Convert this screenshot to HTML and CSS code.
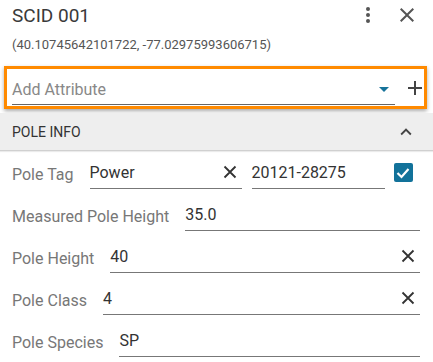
FILE: index.html
```html
<!DOCTYPE html>
<html>
<head>
<meta charset="utf-8">
<link rel="stylesheet" href="styles.css">
</head>
<body>
<div class="panel">
  <div class="header">
    <div class="title-row">
      <div class="title">SCID 001</div>
      <div class="actions">
        <svg class="icon kebab" width="24" height="24" viewBox="0 0 24 24"><circle cx="12" cy="6" r="2"/><circle cx="12" cy="12" r="2"/><circle cx="12" cy="18" r="2"/></svg>
        <svg class="icon close" width="24" height="24" viewBox="0 0 24 24"><path d="M19 6.41L17.59 5 12 10.59 6.41 5 5 6.41 10.59 12 5 17.59 6.41 19 12 13.41 17.59 19 19 17.59 13.41 12z"/></svg>
      </div>
    </div>
    <div class="coords">(40.10745642101722, -77.02975993606715)</div>
  </div>

  <div class="add-box">
    <div class="add-field">
      <span class="placeholder">Add Attribute</span>
      <svg class="caret" width="10" height="6" viewBox="0 0 10 6"><path d="M0 0h10L5 5z"/></svg>
    </div>
    <svg class="plus" width="18" height="18" viewBox="0 0 18 18"><path d="M8 2h2v6h6v2h-6v6H8v-6H2V8h6z"/></svg>
  </div>

  <div class="section-head">
    <span>POLE INFO</span>
    <svg class="chev" width="24" height="24" viewBox="0 0 24 24"><path d="M7.41 15.41L12 10.83l4.59 4.58L18 14l-6-6-6 6z"/></svg>
  </div>

  <div class="rows">
    <div class="row">
      <span class="label">Pole Tag</span>
      <div class="field f-power"><span class="val">Power</span><svg class="x" width="14" height="14" viewBox="0 0 14 14"><path d="M1.5 1.5l11 11M12.5 1.5l-11 11"/></svg></div>
      <div class="field f-tag"><span class="val">20121-28275</span></div>
      <div class="check"><svg width="14" height="12" viewBox="0 0 14 12"><path d="M1.5 6l4 4 7-8"/></svg></div>
    </div>
    <div class="row">
      <span class="label">Measured Pole Height</span>
      <div class="field grow"><span class="val">35.0</span></div>
    </div>
    <div class="row">
      <span class="label">Pole Height</span>
      <div class="field grow"><span class="val">40</span><svg class="x" width="14" height="14" viewBox="0 0 14 14"><path d="M1.5 1.5l11 11M12.5 1.5l-11 11"/></svg></div>
    </div>
    <div class="row">
      <span class="label">Pole Class</span>
      <div class="field grow"><span class="val">4</span><svg class="x" width="14" height="14" viewBox="0 0 14 14"><path d="M1.5 1.5l11 11M12.5 1.5l-11 11"/></svg></div>
    </div>
    <div class="row">
      <span class="label">Pole Species</span>
      <div class="field grow"><span class="val">SP</span></div>
    </div>
  </div>
  <div class="footer-band"></div>
</div>
</body>
</html>
```
FILE: styles.css
```css
html, body {
  margin: 0;
  padding: 0;
  background: #fff;
}
body {
  font-family: Roboto, "Liberation Sans", sans-serif;
  color: #333;
  width: 433px;
  height: 362px;
  overflow: hidden;
}
.header {
  padding: 2px 12px 0 12px;
}
.title-row {
  display: flex;
  justify-content: space-between;
  align-items: center;
  height: 26px;
}
.title {
  font-size: 19px;
  color: #3a3a3a;
}
.actions {
  display: flex;
  align-items: center;
  gap: 15px;
  margin-right: 2px;
}
.icon {
  fill: #555;
}
.coords {
  font-size: 13px;
  color: #555;
  margin-top: 9px;
  line-height: 15px;
}
.add-box {
  margin: 14px 6px 0 4px;
  border: 3px solid #ff8a00;
  box-shadow: 0 2px 4px rgba(0,0,0,0.35);
  display: flex;
  align-items: center;
  height: 37px;
  padding: 0 0 0 5px;
}
.add-field {
  flex: 1;
  display: flex;
  align-items: center;
  justify-content: space-between;
  border-bottom: 1px solid #666;
  height: 30px;
  margin-top: 4px;
  padding-right: 6px;
}
.placeholder {
  font-size: 16px;
  color: #888;
}
.caret {
  fill: #16739a;
  margin-top: 2px;
}
.plus {
  fill: #444;
  margin-left: 11px;
  margin-top: 1px;
}
.section-head {
  margin-top: 4px;
  background: #eeeeee;
  height: 37px;
  display: flex;
  align-items: center;
  justify-content: space-between;
  padding: 0 16px 0 12px;
  font-size: 14px;
  color: #333;
  border-bottom: 1px solid #d0d0d0;
  box-shadow: 0 1px 1px rgba(0,0,0,0.08);
}
.chev {
  fill: #444;
  width: 22px;
  height: 22px;
}
.rows {
  padding: 1px 13px 0 12px;
}
.row {
  display: flex;
  align-items: center;
  height: 42px;
}
.label {
  font-size: 16px;
  color: #777;
  margin-right: 16px;
  white-space: nowrap;
  margin-top: 2px;
}
.field {
  display: flex;
  align-items: center;
  justify-content: space-between;
  border-bottom: 1px solid #777;
  height: 26px;
  margin-top: 5px;
}
.val {
  font-size: 16px;
  color: #333;
  margin-top: -6px;
}
.grow {
  flex: 1;
}
.f-power {
  width: 152px;
  margin-left: 0;
}
.f-tag {
  width: 133px;
  margin-left: 10px;
}
.x {
  fill: none;
  stroke: #333;
  stroke-width: 1.8;
  margin-top: -6px;
  margin-right: 5px;
}
.check {
  margin-left: 9px;
  width: 19px;
  height: 19px;
  background: #12729a;
  border-radius: 2px;
  display: flex;
  align-items: center;
  justify-content: center;
  margin-top: -1px;
}
.check path {
  fill: none;
  stroke: #fff;
  stroke-width: 2.2;
}
.footer-band {
  margin-top: 1px;
  height: 10px;
  background: #f6f6f6;
}
```
